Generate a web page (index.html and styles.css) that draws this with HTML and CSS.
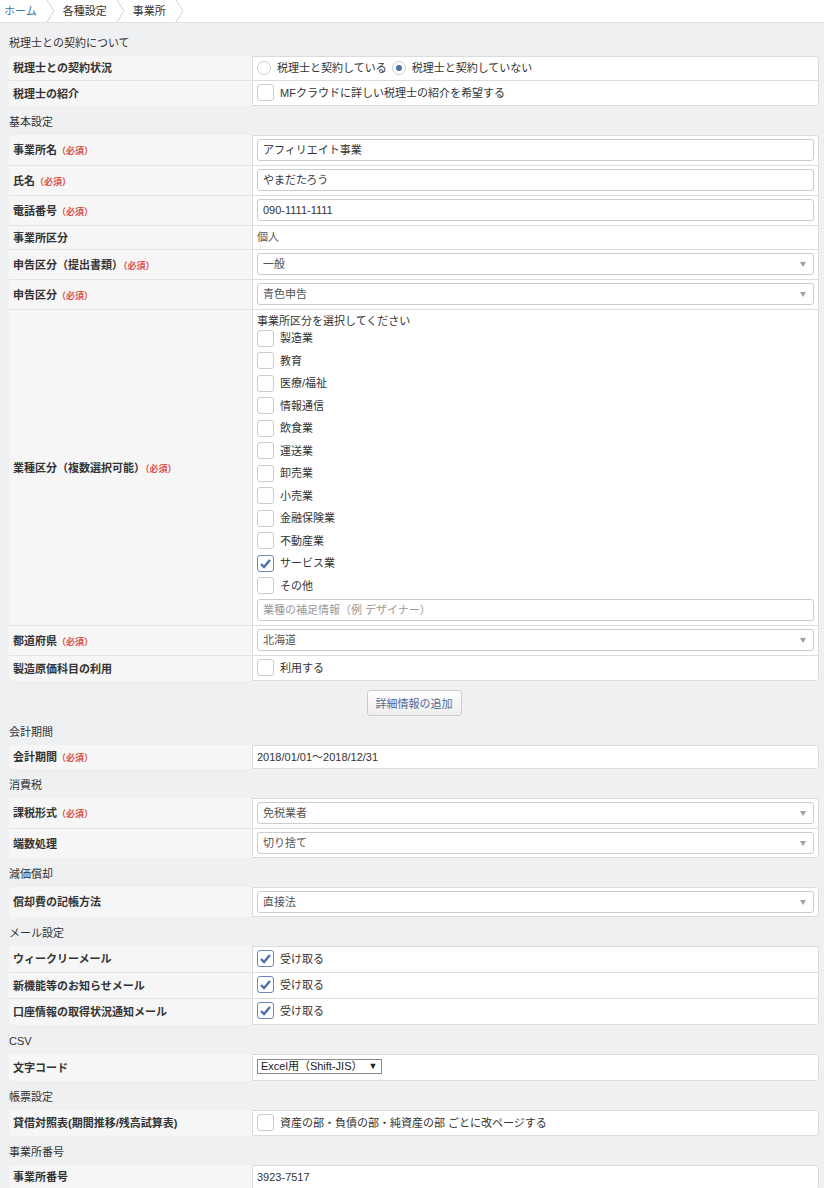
FILE: index.html
```html
<!DOCTYPE html>
<html lang="ja">
<head>
    <meta charset="UTF-8">
    <title>事業所</title>
    <link rel="stylesheet" href="styles.css">
</head>
<body>
    <nav class="breadcrumb">
        <a class="crumb crumb-link" href="#">ホーム</a>
        <svg class="crumb-sep" width="14" height="22" viewBox="0 0 14 22"><polyline points="4,0 11,11 4,22" /></svg>
        <span class="crumb">各種設定</span>
        <svg class="crumb-sep" width="14" height="22" viewBox="0 0 14 22"><polyline points="4,0 11,11 4,22" /></svg>
        <span class="crumb">事業所</span>
        <svg class="crumb-sep" width="14" height="22" viewBox="0 0 14 22"><polyline points="4,0 11,11 4,22" /></svg>
    </nav>

    <main class="settings">
        <!-- 税理士 -->
        <h2 class="section-title first">税理士との契約について</h2>
        <table class="form-table">
            <tr>
                <th>税理士との契約状況</th>
                <td>
                    <div class="radio-group">
                        <label class="radio"><span class="radio-dot"></span>税理士と契約している</label>
                        <label class="radio"><span class="radio-dot checked"></span>税理士と契約していない</label>
                    </div>
                </td>
            </tr>
            <tr>
                <th>税理士の紹介</th>
                <td class="check-cell"><label class="check"><span class="box"></span>MFクラウドに詳しい税理士の紹介を希望する</label></td>
            </tr>
        </table>

        <!-- 基本設定 -->
        <h2 class="section-title">基本設定</h2>
        <table class="form-table">
            <tr>
                <th>事業所名<span class="req">（必須）</span></th>
                <td><div class="input">アフィリエイト事業</div></td>
            </tr>
            <tr>
                <th>氏名<span class="req">（必須）</span></th>
                <td><div class="input">やまだたろう</div></td>
            </tr>
            <tr>
                <th>電話番号<span class="req">（必須）</span></th>
                <td><div class="input">090-1111-1111</div></td>
            </tr>
            <tr>
                <th>事業所区分</th>
                <td class="text-cell"><div class="text-line">個人</div></td>
            </tr>
            <tr>
                <th>申告区分（提出書類）<span class="req">（必須）</span></th>
                <td><div class="input select">一般</div></td>
            </tr>
            <tr>
                <th>申告区分<span class="req">（必須）</span></th>
                <td><div class="input select">青色申告</div></td>
            </tr>
            <tr>
                <th>業種区分（複数選択可能）<span class="req">（必須）</span></th>
                <td class="industry-cell">
                    <div class="hint">事業所区分を選択してください</div>
                    <div class="check-list">
                        <label class="check"><span class="box"></span>製造業</label>
                        <label class="check"><span class="box"></span>教育</label>
                        <label class="check"><span class="box"></span>医療/福祉</label>
                        <label class="check"><span class="box"></span>情報通信</label>
                        <label class="check"><span class="box"></span>飲食業</label>
                        <label class="check"><span class="box"></span>運送業</label>
                        <label class="check"><span class="box"></span>卸売業</label>
                        <label class="check"><span class="box"></span>小売業</label>
                        <label class="check"><span class="box"></span>金融保険業</label>
                        <label class="check"><span class="box"></span>不動産業</label>
                        <label class="check"><span class="box checked"><svg width="13" height="13" viewBox="0 0 13 13"><polyline points="2,7 5,10 11,3" /></svg></span>サービス業</label>
                        <label class="check"><span class="box"></span>その他</label>
                    </div>
                    <div class="input placeholder">業種の補足情報（例 デザイナー）</div>
                </td>
            </tr>
            <tr>
                <th>都道府県<span class="req">（必須）</span></th>
                <td><div class="input select">北海道</div></td>
            </tr>
            <tr>
                <th>製造原価科目の利用</th>
                <td class="check-cell"><label class="check"><span class="box"></span>利用する</label></td>
            </tr>
        </table>

        <div class="more-row">
            <button class="btn-more">詳細情報の追加</button>
        </div>

        <!-- 会計期間 -->
        <h2 class="section-title">会計期間</h2>
        <table class="form-table">
            <tr>
                <th>会計期間<span class="req">（必須）</span></th>
                <td class="text-cell dark"><div class="text-line">2018/01/01～2018/12/31</div></td>
            </tr>
        </table>

        <!-- 消費税 -->
        <h2 class="section-title">消費税</h2>
        <table class="form-table">
            <tr>
                <th>課税形式<span class="req">（必須）</span></th>
                <td><div class="input select">免税業者</div></td>
            </tr>
            <tr>
                <th>端数処理</th>
                <td><div class="input select">切り捨て</div></td>
            </tr>
        </table>

        <!-- 減価償却 -->
        <h2 class="section-title">減価償却</h2>
        <table class="form-table">
            <tr>
                <th>償却費の記帳方法</th>
                <td><div class="input select">直接法</div></td>
            </tr>
        </table>

        <!-- メール設定 -->
        <h2 class="section-title">メール設定</h2>
        <table class="form-table">
            <tr>
                <th>ウィークリーメール</th>
                <td class="check-cell mail"><label class="check"><span class="box checked"><svg width="13" height="13" viewBox="0 0 13 13"><polyline points="2,7 5,10 11,3" /></svg></span>受け取る</label></td>
            </tr>
            <tr>
                <th>新機能等のお知らせメール</th>
                <td class="check-cell mail"><label class="check"><span class="box checked"><svg width="13" height="13" viewBox="0 0 13 13"><polyline points="2,7 5,10 11,3" /></svg></span>受け取る</label></td>
            </tr>
            <tr>
                <th>口座情報の取得状況通知メール</th>
                <td class="check-cell mail"><label class="check"><span class="box checked"><svg width="13" height="13" viewBox="0 0 13 13"><polyline points="2,7 5,10 11,3" /></svg></span>受け取る</label></td>
            </tr>
        </table>

        <!-- CSV -->
        <h2 class="section-title">CSV</h2>
        <table class="form-table">
            <tr>
                <th>文字コード</th>
                <td class="native-cell"><span class="native-select">Excel用（Shift-JIS）<span class="native-arrow">▼</span></span></td>
            </tr>
        </table>

        <!-- 帳票設定 -->
        <h2 class="section-title">帳票設定</h2>
        <table class="form-table">
            <tr>
                <th>貸借対照表(期間推移/残高試算表)</th>
                <td class="check-cell"><label class="check"><span class="box"></span>資産の部・負債の部・純資産の部 ごとに改ページする</label></td>
            </tr>
        </table>

        <!-- 事業所番号 -->
        <h2 class="section-title">事業所番号</h2>
        <table class="form-table">
            <tr>
                <th>事業所番号</th>
                <td class="text-cell dark"><div class="text-line">3923-7517</div></td>
            </tr>
        </table>
    </main>
</body>
</html>
```

FILE: styles.css
```css
:root {
    --page-bg: #eff0f2;
    --label-bg: #f6f6f6;
    --line: #dcdcdc;
    --label-line: #e4e4e4;
    --text: #333333;
    --muted: #555555;
    --link: #337ab7;
    --required: #d9534f;
    --check-blue: #4a70ad;
}

html, body {
    margin: 0;
    padding: 0;
}

body {
    font-family: "Liberation Sans", "Noto Sans CJK JP", sans-serif;
    font-size: 11px;
    line-height: 16px;
    color: var(--text);
    background-color: var(--page-bg);
}

/* breadcrumb */
.breadcrumb {
    display: flex;
    align-items: center;
    height: 22px;
    background: #fff;
    border-bottom: 1px solid #e2e2e2;
    padding-left: 4px;
}

.crumb {
    color: var(--text);
    text-decoration: none;
    line-height: 22px;
}

.crumb-link {
    color: var(--link);
}

.crumb-sep {
    margin: 0 6px;
}

.crumb-sep polyline {
    fill: none;
    stroke: #d2d2d2;
    stroke-width: 1;
}

/* layout */
.settings {
    padding: 4px 5px 0 9px;
}

.section-title {
    font-size: 11px;
    font-weight: normal;
    line-height: 16px;
    height: 16px;
    margin: 0;
    padding: 8px 0 5px;
}

.form-table {
    width: 100%;
    border-collapse: separate;
    border-spacing: 0;
}

.form-table th {
    width: 235px;
    background: var(--label-bg);
    text-align: left;
    font-weight: bold;
    padding: 0 4px;
    border-top: 1px solid var(--label-line);
    vertical-align: middle;
    white-space: nowrap;
}

.form-table tr:first-child th {
    border-top: none;
    border-top-left-radius: 4px;
}

.form-table tr:last-child th {
    border-bottom-left-radius: 4px;
}

.form-table td {
    background: #fff;
    border-top: 1px solid var(--line);
    border-left: 1px solid var(--line);
    border-right: 1px solid var(--line);
    padding: 3px 4px 4px;
    vertical-align: top;
}

.form-table tr:first-child td {
    border-top-right-radius: 3px;
}

.form-table tr:last-child td {
    border-bottom: 1px solid var(--line);
    border-bottom-right-radius: 3px;
}

.form-table tr:last-child td:not(.check-cell) {
    padding-bottom: 3px;
}

.req {
    color: var(--required);
    font-size: 9px;
    font-weight: bold;
    line-height: 10px;
}

.text-cell {
    color: var(--muted);
}

.text-cell.dark {
    color: var(--text);
}

.text-line {
    height: 16px;
    overflow: hidden;
}

/* text inputs and selects */
.input {
    position: relative;
    height: 22px;
    line-height: 20px;
    box-sizing: border-box;
    border: 1px solid #cccccc;
    border-radius: 3px;
    padding: 0 5px;
    background: #fff;
    color: var(--text);
    overflow: hidden;
}

.input.select {
    color: var(--muted);
}

.input.select::after {
    content: "";
    position: absolute;
    right: 7px;
    top: 8px;
    border-left: 3px solid transparent;
    border-right: 3px solid transparent;
    border-top: 5px solid #a0a0a0;
}

.input.placeholder {
    color: #999999;
    margin-top: 2px;
}

/* radios */
.radio-group {
    display: flex;
    align-items: center;
    height: 16px;
    gap: 5px;
}

.radio {
    display: flex;
    align-items: center;
    gap: 6px;
    height: 16px;
}

.radio-dot {
    width: 14px;
    height: 14px;
    box-sizing: border-box;
    border: 1px solid #cfcfcf;
    border-radius: 50%;
    background: #fff;
    position: relative;
}

.radio-dot.checked::after {
    content: "";
    position: absolute;
    left: 3px;
    top: 3px;
    width: 6px;
    height: 6px;
    border-radius: 50%;
    background: var(--check-blue);
}

/* checkboxes */
.check {
    display: flex;
    align-items: center;
    gap: 6px;
    height: 17px;
}

.check-cell.mail {
    padding-top: 3px;
    padding-bottom: 5px;
}

.box {
    flex: none;
    width: 17px;
    height: 17px;
    box-sizing: border-box;
    border: 1px solid #cccccc;
    border-radius: 3px;
    background: #fff;
    display: flex;
    align-items: center;
    justify-content: center;
}

.box.checked {
    border-color: #6a88bb;
}

.box polyline {
    fill: none;
    stroke: var(--check-blue);
    stroke-width: 2.4;
}

.industry-cell {
    padding-bottom: 2px;
}

.hint {
    height: 16px;
}

.check-list {
    margin-top: -2px;
}

.check-list .check {
    height: 22.5px;
}

/* add details button */
.more-row {
    display: flex;
    justify-content: center;
    padding-top: 9px;
}

.btn-more {
    font-family: inherit;
    font-size: 11px;
    color: #53699a;
    height: 26px;
    padding: 0 8px;
    border: 1px solid #cccccc;
    border-radius: 3px;
    background: linear-gradient(#ffffff, #eeeeee);
}

/* native select */
.native-cell {
    height: 19px;
}

.native-select {
    display: inline-flex;
    align-items: center;
    height: 15px;
    box-sizing: border-box;
    border: 1px solid #8a8a8a;
    padding: 0 4px 0 3px;
    font-size: 11px;
    line-height: 13px;
    background: #fff;
    color: #222;
    margin-top: 1px;
}

.native-arrow {
    font-size: 9px;
    margin-left: 6px;
}
```
